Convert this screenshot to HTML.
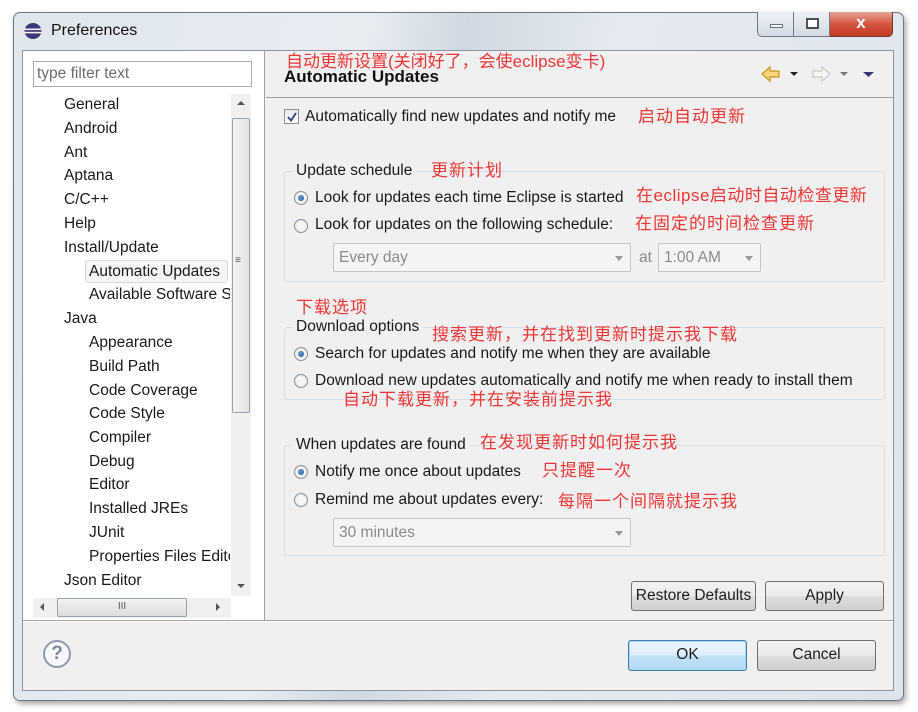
<!DOCTYPE html>
<html><head><meta charset="utf-8"><style>
*{margin:0;padding:0;box-sizing:border-box}
body{width:918px;height:712px;background:#fff;position:relative;overflow:hidden;font-family:"Liberation Sans","Noto Sans CJK SC",sans-serif;font-size:15.5px;line-height:20px;color:#1e1e1e}
.a{position:absolute;white-space:nowrap}
.r{position:absolute;white-space:nowrap;color:#ee3535;font-family:"Liberation Sans","Noto Sans CJK SC",sans-serif;font-size:17px;line-height:20px;letter-spacing:1px}
.frame{left:13px;top:12px;width:891px;height:689px;border:1px solid #6e7781;border-radius:7px;background:linear-gradient(100deg,#dfe6ee 0%,#e8edf2 35%,#cfd8e1 45%,#e5eaf0 60%,#dde4eb 100%);box-shadow:2px 3px 6px rgba(0,0,0,.35)}
.client{left:22px;top:50px;width:872px;height:641px;border:1px solid #8d96a0;background:#f0f0f0}
.rad{position:absolute;width:14px;height:14px;border-radius:50%;border:1px solid #8a9199;background:radial-gradient(circle,#f6f6f6 40%,#dcdcdc 100%)}
.rad.on::after{content:"";position:absolute;left:3px;top:3px;width:6px;height:6px;border-radius:50%;background:radial-gradient(circle at 40% 40%,#6aa0d8,#1c4f8c)}
.grp{position:absolute;border:1px solid #d5dfe5;border-radius:3px}
.combo{position:absolute;border:1px solid #c6c6c6;border-radius:2px;background:#f4f4f4;color:#8a8a8a;padding-left:5px;line-height:27px}
.combo::after{content:"";position:absolute;right:7px;top:12px;border:4px solid transparent;border-top:5px solid #9a9a9a}
.btn{position:absolute;border:1px solid #707070;border-radius:3px;background:linear-gradient(#f2f2f2,#ebebeb 50%,#dddddd 51%,#cfcfcf);text-align:center;line-height:27px;font-size:15.5px}
.t{position:absolute;white-space:nowrap;color:#1a1a1a}
</style></head><body>
<div class="a frame"></div>
<svg class="a" style="left:23px;top:22px" width="20" height="18" viewBox="0 0 20 18"><ellipse cx="10" cy="9" rx="8.5" ry="8" fill="#3d3878"/><rect x="1" y="6.5" width="18" height="1.6" fill="#f0f0f5"/><rect x="1" y="9.8" width="18" height="1.6" fill="#f0f0f5"/></svg>
<div class="a" style="left:51px;top:21px;font-size:16px;color:#111">Preferences</div>
<div class="a" style="left:757px;top:12px;width:37px;height:25px;border:1px solid #6f7a86;border-top:none;border-radius:0 0 0 5px;background:linear-gradient(#eef2f6,#d2dae3)"></div>
<div class="a" style="left:770px;top:24px;width:13px;height:4px;background:#fafafa;border:1px solid #6a737d"></div>
<div class="a" style="left:794px;top:12px;width:36px;height:25px;border:1px solid #6f7a86;border-top:none;border-left:none;background:linear-gradient(#eef2f6,#d2dae3)"></div>
<div class="a" style="left:806px;top:18px;width:13px;height:11px;border:2px solid #4a525c;background:#fff"></div>
<div class="a" style="left:830px;top:12px;width:63px;height:25px;border:1px solid #6f3a34;border-top:none;border-left:none;border-radius:0 0 5px 0;background:linear-gradient(#e8a497,#d4553f 50%,#c13a26);color:#fff;font-weight:bold;text-align:center;font-size:17px;line-height:22px">x</div>
<div class="a client"></div>
<div class="a" style="left:23px;top:51px;width:242px;height:569px;background:#fff;border-right:1px solid #a0a0a0"></div>
<div class="a" style="left:33px;top:61px;width:219px;height:26px;border:1px solid #abadb3;background:#fff;color:#6d6d6d;padding-left:3px;line-height:24px">type filter text</div>
<div class="t" style="left:64px;top:95px">General</div>
<div class="t" style="left:64px;top:119px">Android</div>
<div class="t" style="left:64px;top:143px">Ant</div>
<div class="t" style="left:64px;top:166px">Aptana</div>
<div class="t" style="left:64px;top:190px">C/C++</div>
<div class="t" style="left:64px;top:214px">Help</div>
<div class="t" style="left:64px;top:238px">Install/Update</div>
<div class="a" style="left:85px;top:260px;width:143px;height:23px;border:1px solid #d9d9d9;border-radius:3px;background:#f5f5f5"></div>
<div class="t" style="left:89px;top:262px">Automatic Updates</div>
<div class="t" style="left:89px;top:285px;width:141px;overflow:hidden">Available Software Sites</div>
<div class="t" style="left:64px;top:309px">Java</div>
<div class="t" style="left:89px;top:333px">Appearance</div>
<div class="t" style="left:89px;top:357px">Build Path</div>
<div class="t" style="left:89px;top:381px">Code Coverage</div>
<div class="t" style="left:89px;top:404px">Code Style</div>
<div class="t" style="left:89px;top:428px">Compiler</div>
<div class="t" style="left:89px;top:452px">Debug</div>
<div class="t" style="left:89px;top:475px">Editor</div>
<div class="t" style="left:89px;top:499px">Installed JREs</div>
<div class="t" style="left:89px;top:523px">JUnit</div>
<div class="t" style="left:89px;top:547px;width:141px;overflow:hidden">Properties Files Editor</div>
<div class="t" style="left:64px;top:571px">Json Editor</div>
<div class="a" style="left:231px;top:94px;width:20px;height:502px;background:#f0f0f0"></div>
<div class="a" style="left:237px;top:101px;border:4px solid transparent;border-bottom:4px solid #555;border-top:none"></div>
<div class="a" style="left:232px;top:118px;width:18px;height:295px;border:1px solid #9da3aa;border-radius:2px;background:linear-gradient(90deg,#f3f3f3,#e2e2e2)"></div>
<div class="a" style="left:235px;top:258px;font-size:10px;color:#555;line-height:5px">≡</div>
<div class="a" style="left:237px;top:584px;border:4px solid transparent;border-top:4px solid #555;border-bottom:none"></div>
<div class="a" style="left:33px;top:598px;width:198px;height:20px;background:#f0f0f0"></div>
<div class="a" style="left:40px;top:603px;border:4px solid transparent;border-right:4px solid #555;border-left:none"></div>
<div class="a" style="left:57px;top:598px;width:130px;height:19px;border:1px solid #9da3aa;border-radius:2px;background:linear-gradient(#f3f3f3,#dcdcdc);text-align:center;font-size:10px;line-height:16px;color:#555">III</div>
<div class="a" style="left:216px;top:603px;border:4px solid transparent;border-left:4px solid #555;border-right:none"></div>
<div class="a" style="left:284px;top:67px;font-weight:bold;font-size:17px;color:#111">Automatic Updates</div>
<div class="r" style="left:286px;top:52px;letter-spacing:0">自动更新设置(关闭好了，会使eclipse变卡)</div>
<div class="a" style="left:266px;top:97px;width:627px;height:1px;background:#a0a0a0"></div>
<svg class="a" style="left:760px;top:64px" width="120" height="20" viewBox="0 0 120 20"><path d="M2 10 L10 3 L10 7 L19 7 L19 13 L10 13 L10 17 Z" fill="#fbd77a" stroke="#c8901e" stroke-width="1.2"/><path d="M30 8 L38 8 L34 12 Z" fill="#222"/><path d="M70 10 L62 3 L62 7 L53 7 L53 13 L62 13 L62 17 Z" fill="#f4f4f0" stroke="#c9cbc4" stroke-width="1.2"/><path d="M80 8 L88 8 L84 12 Z" fill="#777"/><path d="M103 8 L114 8 L108.5 13 Z" fill="#3a3570"/></svg>
<div class="a" style="left:284px;top:109px;width:15px;height:15px;border:1px solid #8e8f8f;background:linear-gradient(#eaeaea,#fff)"></div>
<svg class="a" style="left:286px;top:111px" width="12" height="12" viewBox="0 0 12 12"><path d="M2 6 L5 9.5 L10 2" fill="none" stroke="#2d4c8a" stroke-width="2"/></svg>
<div class="t" style="left:305px;top:107px">Automatically find new updates and notify me</div>
<div class="r" style="left:638px;top:107px">启动自动更新</div>
<div class="grp" style="left:284px;top:171px;width:601px;height:111px"></div>
<div class="a" style="left:292px;top:161px;background:#f0f0f0;padding:0 4px;color:#1a1a1a">Update schedule</div>
<div class="r" style="left:431px;top:161px">更新计划</div>
<div class="rad on" style="left:294px;top:191px"></div>
<div class="t" style="left:315px;top:188px">Look for updates each time Eclipse is started</div>
<div class="r" style="left:636px;top:186px;letter-spacing:0.5px">在eclipse启动时自动检查更新</div>
<div class="rad" style="left:294px;top:219px"></div>
<div class="t" style="left:315px;top:215px">Look for updates on the following schedule:</div>
<div class="r" style="left:635px;top:214px">在固定的时间检查更新</div>
<div class="combo" style="left:333px;top:243px;width:298px;height:29px">Every day</div>
<div class="a" style="left:639px;top:248px;color:#8a8a8a">at</div>
<div class="combo" style="left:658px;top:243px;width:103px;height:29px">1:00 AM</div>
<div class="r" style="left:296px;top:298px">下载选项</div>
<div class="grp" style="left:284px;top:327px;width:601px;height:73px"></div>
<div class="a" style="left:292px;top:317px;background:#f0f0f0;padding:0 4px;color:#1a1a1a">Download options</div>
<div class="r" style="left:432px;top:325px">搜索更新，并在找到更新时提示我下载</div>
<div class="rad on" style="left:294px;top:347px"></div>
<div class="t" style="left:315px;top:344px">Search for updates and notify me when they are available</div>
<div class="rad" style="left:294px;top:374px"></div>
<div class="t" style="left:315px;top:371px">Download new updates automatically and notify me when ready to install them</div>
<div class="r" style="left:343px;top:390px">自动下载更新，并在安装前提示我</div>
<div class="grp" style="left:284px;top:445px;width:601px;height:111px"></div>
<div class="a" style="left:292px;top:435px;background:#f0f0f0;padding:0 4px;color:#1a1a1a">When updates are found</div>
<div class="r" style="left:480px;top:433px">在发现更新时如何提示我</div>
<div class="rad on" style="left:294px;top:465px"></div>
<div class="t" style="left:315px;top:462px">Notify me once about updates</div>
<div class="r" style="left:542px;top:461px">只提醒一次</div>
<div class="rad" style="left:294px;top:493px"></div>
<div class="t" style="left:315px;top:490px">Remind me about updates every:</div>
<div class="r" style="left:558px;top:492px">每隔一个间隔就提示我</div>
<div class="combo" style="left:333px;top:518px;width:298px;height:29px">30 minutes</div>
<div class="btn" style="left:631px;top:581px;width:125px;height:30px">Restore Defaults</div>
<div class="btn" style="left:765px;top:581px;width:119px;height:30px">Apply</div>
<div class="a" style="left:23px;top:620px;width:870px;height:1px;background:#a0a0a0"></div>
<div class="a" style="left:23px;top:621px;width:870px;height:1px;background:#fff"></div>
<div class="a" style="left:43px;top:640px;width:28px;height:28px;border:2px solid #8d9ab0;border-radius:50%;color:#7b889e;font-weight:bold;text-align:center;font-size:19px;line-height:24px;background:#f6f7f9">?</div>
<div class="btn" style="left:628px;top:640px;width:119px;height:31px;border-color:#3c7fb1;box-shadow:inset 0 0 0 1px #a7d6f3;background:linear-gradient(#eaf5fc,#dcedf9 50%,#c1e2f7 51%,#b4dbf4)">OK</div>
<div class="btn" style="left:757px;top:640px;width:119px;height:31px">Cancel</div>
</body></html>
